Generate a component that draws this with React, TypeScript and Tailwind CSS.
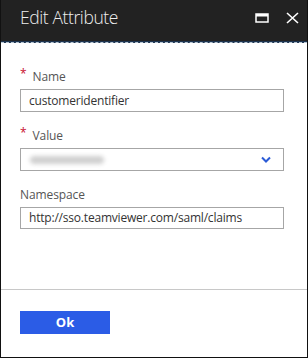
function Field({
  label,
  required,
  children,
}: {
  label: string;
  required?: boolean;
  children: React.ReactNode;
}) {
  return (
    <div>
      <div className="flex h-[17px] items-center text-[12px] leading-none tracking-[-0.1px] text-[#555]">
        {required && <span className="mr-[6px] -mt-[5px] text-[12px] text-[#c8102e]">*</span>}
        {label}
      </div>
      <div className="mt-[4px]">{children}</div>
    </div>
  );
}

export default function App() {
  return (
    <div
      className="flex h-[358px] w-[308px] flex-col border border-[#111] border-t-0 bg-white"
      style={{ fontFamily: '"Open Sans", "Noto Sans", sans-serif' }}
    >
      {/* header */}
      <div className="flex h-[41px] items-center justify-between bg-[#222] pl-[19px] pr-[8px]">
        <h1 className="-mt-[6px] text-[17.5px] font-light leading-none tracking-[-0.4px] text-[#eee]">
          Edit Attribute
        </h1>
        <div className="-mt-[6px] flex items-center gap-[17px]">
          <svg width="14" height="10" viewBox="0 0 14 10">
            <rect x="1" y="1" width="12" height="8" fill="none" stroke="#fff" strokeWidth="1.5" />
            <rect x="1" y="1" width="12" height="2.5" fill="#fff" />
          </svg>
          <svg width="13" height="12" viewBox="0 0 13 12">
            <path d="M1 1 L12 11 M12 1 L1 11" stroke="#fff" strokeWidth="1.6" />
          </svg>
        </div>
      </div>
      <div className="h-[1px] bg-[#1e3550]" />
      <div className="h-[1px] border-t border-dashed border-[#b9c7d4] bg-[#1e3550]" />

      {/* form */}
      <div className="flex flex-col gap-[15px] px-[19px] pt-[25px]">
        <Field label="Name" required>
          <div className="flex h-[23px] w-[264px] items-center border border-[#a6a6a6] px-[8px] text-[12px] tracking-[-0.2px] text-[#333]">
            customeridentifier
          </div>
        </Field>
        <Field label="Value" required>
          <div className="flex h-[23px] w-[264px] items-center justify-between border border-[#a6a6a6] pl-[9px] pr-[12px]">
            <div className="h-[8px] w-[74px] rounded-sm bg-[#d0d0d0] blur-[2px]" />
            <svg width="10" height="7" viewBox="0 0 10 7">
              <path d="M1 1.5 L5 5.5 L9 1.5" fill="none" stroke="#2b5bd6" strokeWidth="2" />
            </svg>
          </div>
        </Field>
        <Field label="Namespace">
          <div className="flex h-[22px] w-[264px] items-center border border-[#a6a6a6] px-[8px] text-[12px] tracking-[-0.2px] text-[#333]">
            http://sso.teamviewer.com/saml/claims
          </div>
        </Field>
      </div>

      <div className="flex-1" />
      <div className="h-[1px] bg-[#c8c8c8]" />
      <div className="h-[67px] px-[19px] pt-[21px]">
        <button className="flex h-[23px] w-[90px] items-center justify-center bg-[#2b5ce6] text-[13px] font-bold text-white">
          Ok
        </button>
      </div>
    </div>
  );
}
